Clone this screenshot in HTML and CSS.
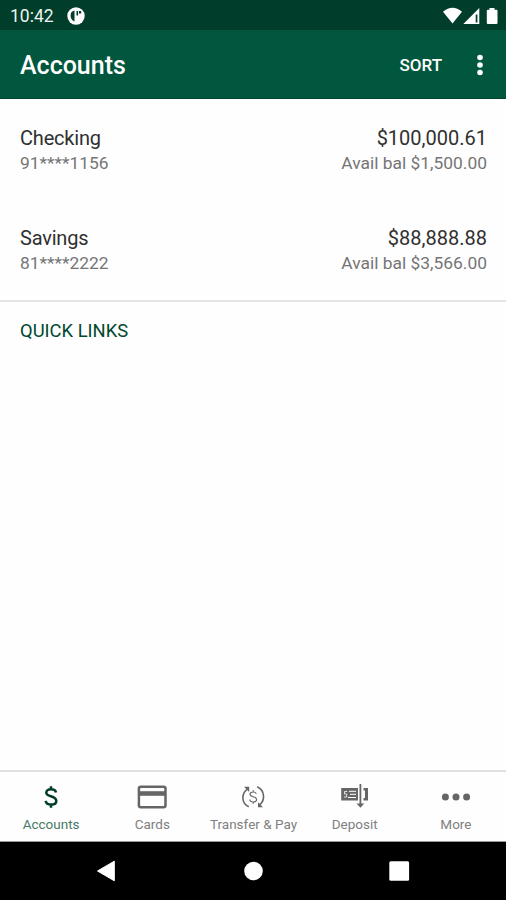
FILE: index.html
```
<!DOCTYPE html>
<html lang="en">
<head>
    <meta charset="UTF-8">
    <meta name="viewport" content="width=device-width, initial-scale=1.0">
    <title>Accounts</title>
    <link rel="stylesheet" href="styles.css">
</head>
<body>
    <div class="status-bar">
        <span class="time">10:42</span>
        <svg class="status-app" width="18" height="18" viewBox="0 0 18 18">
            <circle cx="9" cy="9" r="8.7" fill="#fff"/>
            <path d="M7.5 3.5C4.6 4 3.6 6 3.6 8.8S5 13.6 7.5 14.4Z" fill="#003d2b"/>
            <path d="M9.5 4h1.6v4.5H9.5zM12 4h2.2v2.4H12z" fill="#003d2b"/>
        </svg>
        <svg class="status-icons" width="56" height="18" viewBox="0 0 56 18">
            <path d="M0 4.7Q9.5-3.2 19 4.7L9.5 16.5Z" fill="#fff"/>
            <path d="M36.3 1V17H20.3ZM32.7 7.5v8h1.7v-8Z" fill="#fff" fill-rule="evenodd"/>
            <path d="M46.5 1h5v1.7H53.5q1 0 1 1V16q0 1-1 1h-8.7q-1 0-1-1V3.7q0-1 1-1H46.5Z" fill="#fff"/>
        </svg>
    </div>

    <header class="app-bar">
        <h1>Accounts</h1>
        <span class="sort">SORT</span>
        <svg class="menu" width="6" height="22" viewBox="0 0 6 22" fill="#fff">
            <circle cx="3" cy="3.5" r="2.8"/>
            <circle cx="3" cy="11" r="2.8"/>
            <circle cx="3" cy="18.5" r="2.8"/>
        </svg>
    </header>

    <main>
        <div class="account">
            <div>
                <p class="name">Checking</p>
                <p class="number">91****1156</p>
            </div>
            <div class="amounts">
                <p class="balance">$100,000.61</p>
                <p class="available">Avail bal $1,500.00</p>
            </div>
        </div>
        <div class="account">
            <div>
                <p class="name">Savings</p>
                <p class="number">81****2222</p>
            </div>
            <div class="amounts">
                <p class="balance">$88,888.88</p>
                <p class="available">Avail bal $3,566.00</p>
            </div>
        </div>
        <div class="quick-links">QUICK LINKS</div>
    </main>

    <nav class="tabs">
        <div class="tab active">
            <svg width="30" height="26" viewBox="0 0 30 26" fill="none" stroke="currentColor" stroke-width="2.5">
                <path d="M20 8.5C19.5 6.3 17.8 5.3 15 5.3C12 5.3 10.3 6.7 10.3 8.8C10.3 13.5 20.3 11 20.3 17C20.3 19.3 18.3 20.6 15.3 20.6C12 20.6 10 19.2 9.7 16.8M15 2.3V5.5M15 20.5V23.7"/>
            </svg>
            <span>Accounts</span>
        </div>
        <div class="tab">
            <svg width="30" height="26" viewBox="0 0 30 26">
                <rect x="1.9" y="2.7" width="26.6" height="20.6" rx="2" fill="none" stroke="currentColor" stroke-width="2.5"/>
                <path d="M2 7.2h26v4.6H2z" fill="currentColor"/>
            </svg>
            <span>Cards</span>
        </div>
        <div class="tab">
            <svg width="30" height="26" viewBox="0 0 30 26" fill="none" stroke="currentColor" stroke-width="1.6">
                <path d="M10.8 22.7C3.5 19.5 2.5 9.5 10.3 4.3M19.2 2.8C27 6.3 27.7 17 20.7 21.5"/>
                <path d="M6 2.8H11.2V8ZM25 23.2H20V18.2Z" fill="currentColor" stroke="none"/>
                <path d="M18.3 9.8C17.8 8.5 16.7 8 15.2 8C13.2 8 12 8.9 12 10.2C12 13.6 18.6 11.7 18.6 15.5C18.6 17 17.3 18 15.2 18C13.2 18 12 17.2 11.7 15.7M15.2 6.2V8M15.2 18V19.8" stroke-width="1.1"/>
            </svg>
            <span>Transfer &amp; Pay</span>
        </div>
        <div class="tab">
            <svg width="30" height="26" viewBox="0 0 30 26">
                <path d="M1.2 4H18V16.5H1.2Z" fill="currentColor"/>
                <path d="M9 7.3h7M10 10.3h6M8 13.5h8" stroke="#fff" stroke-width="1"/>
                <path d="M7.2 7.5H4.5V10H6.7V13H4" fill="none" stroke="#fff" stroke-width=".8"/>
                <path d="M23.5 4H28V16.5H23.5V14H25V6.5H23.5Z" fill="currentColor"/>
                <path d="M20.4 0V21" stroke="currentColor" stroke-width="1.8"/>
                <path d="M16.5 19.5H24.3L20.4 23.7Z" fill="currentColor"/>
            </svg>
            <span>Deposit</span>
        </div>
        <div class="tab">
            <svg width="30" height="26" viewBox="0 0 30 26" fill="currentColor">
                <circle cx="4.4" cy="13" r="3.5"/>
                <circle cx="15" cy="13" r="3.5"/>
                <circle cx="25.6" cy="13" r="3.5"/>
            </svg>
            <span>More</span>
        </div>
    </nav>

    <div class="system-nav">
        <svg width="22" height="24" viewBox="0 0 22 24"><path d="M1.5 12L18.3 2.2V21.8Z" fill="#fff" stroke="#fff"/></svg>
        <svg width="22" height="24" viewBox="0 0 22 24"><circle cx="11.5" cy="12" r="9.3" fill="#fff"/></svg>
        <svg width="22" height="24" viewBox="0 0 22 24"><rect x="1.3" y="2.2" width="19.8" height="19.6" rx="1.5" fill="#fff"/></svg>
    </div>
</body>
</html>
```
FILE: styles.css
```
* {
    box-sizing: border-box;
}
body {
    font-family: Roboto, sans-serif;
    background-color: #fefefe;
    margin: 0;
    height: 100vh;
    display: flex;
    flex-direction: column;
    overflow: hidden;
}
h1, p {
    margin: 0;
    font-weight: normal;
}
svg {
    display: block;
    flex-shrink: 0;
}
.status-bar {
    height: 30px;
    background-color: #003d2b;
    color: #eef3f0;
    display: flex;
    align-items: center;
    padding: 1px 7px 0 10px;
}
.time {
    font-size: 17.5px;
    line-height: 20px;
    padding-top: 1px;
}
.status-app {
    margin-left: 13px;
}
.status-icons {
    margin-left: auto;
}
.app-bar {
    height: 69px;
    background-color: #00573d;
    border-bottom: 1px solid #00482f;
    color: white;
    display: flex;
    align-items: center;
    padding: 2px 23px 0 20px;
}
.app-bar h1 {
    font-size: 25px;
    font-weight: 500;
    flex: 1;
    padding-top: 1px;
}
.sort {
    font-size: 17px;
    font-weight: 500;
    margin-top: -1px;
}
.menu {
    margin-left: 35px;
}
main {
    flex: 1;
}
.account {
    height: 100px;
    display: flex;
    justify-content: space-between;
    padding: 26px 19px 0 20px;
}
.amounts {
    text-align: right;
}
.name, .balance {
    font-size: 20px;
    line-height: 26px;
    color: #303030;
}
.name {
    letter-spacing: -0.2px;
}
.number, .available {
    font-size: 17.4px;
    line-height: 24px;
    color: #757575;
}
.quick-links {
    border-top: 2px solid #e4e4e4;
    margin-top: 1px;
    padding: 17px 20px;
    font-size: 18.4px;
    line-height: 24px;
    color: #00482f;
}
.tabs {
    height: 72px;
    border-top: 2px solid #e0e0e0;
    border-bottom: 1px solid #999;
    display: grid;
    grid-template-columns: repeat(5, 1fr);
}
.tab {
    display: flex;
    flex-direction: column;
    align-items: center;
    padding: 12px 0 0 1px;
    font-size: 13.5px;
    line-height: 18px;
    color: #666;
}
.tab span {
    margin-top: 5px;
    color: #808080;
    white-space: nowrap;
}
.tab.active {
    color: #003d26;
}
.tab.active span {
    color: #487a68;
}
.system-nav {
    height: 58px;
    background-color: black;
    display: flex;
    justify-content: center;
    align-items: center;
    gap: 124px;
}
```
